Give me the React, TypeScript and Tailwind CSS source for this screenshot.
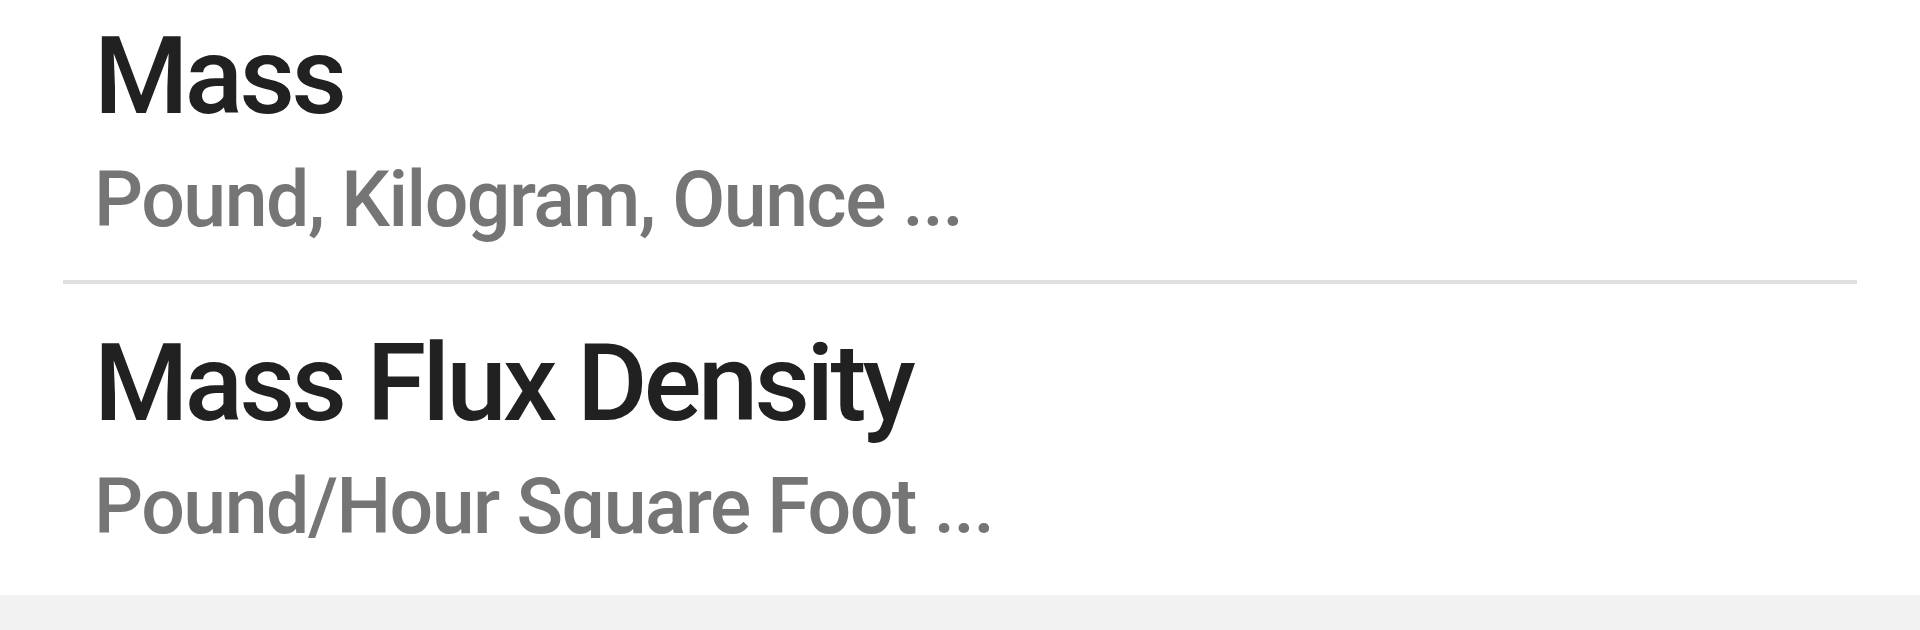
const units = [
  { name: 'Mass', examples: 'Pound, Kilogram, Ounce ...' },
  { name: 'Mass Flux Density', examples: 'Pound/Hour Square Foot ...' },
];

function UnitRow({ name, examples }: { name: string; examples: string }) {
  return (
    <div className="pt-[35px] pb-[20px] pl-[94px]">
      <div className="text-[108px] leading-[128px] font-medium tracking-[-3.6px] text-[#212121] whitespace-nowrap">{name}</div>
      <div className="text-[77px] leading-[120px] font-medium tracking-[-1.5px] text-[#757575] whitespace-nowrap">{examples}</div>
    </div>
  );
}

export default function App() {
  return (
    <div className="w-[1920px] h-[630px] flex flex-col bg-white overflow-hidden font-['Roboto',sans-serif]">
      <div className="h-[595px] bg-white">
        <div className="h-[538px] overflow-hidden">
          <div className="-mt-[23px]">
            {units.map((u, i) => (
              <div key={u.name}>
                <UnitRow name={u.name} examples={u.examples} />
                {i < units.length - 1 && <div className="mx-[63px] h-[4px] bg-[#e0e0e0]" />}
              </div>
            ))}
          </div>
        </div>
      </div>
      <div className="flex-1 bg-[#f2f2f2]" />
    </div>
  );
}
